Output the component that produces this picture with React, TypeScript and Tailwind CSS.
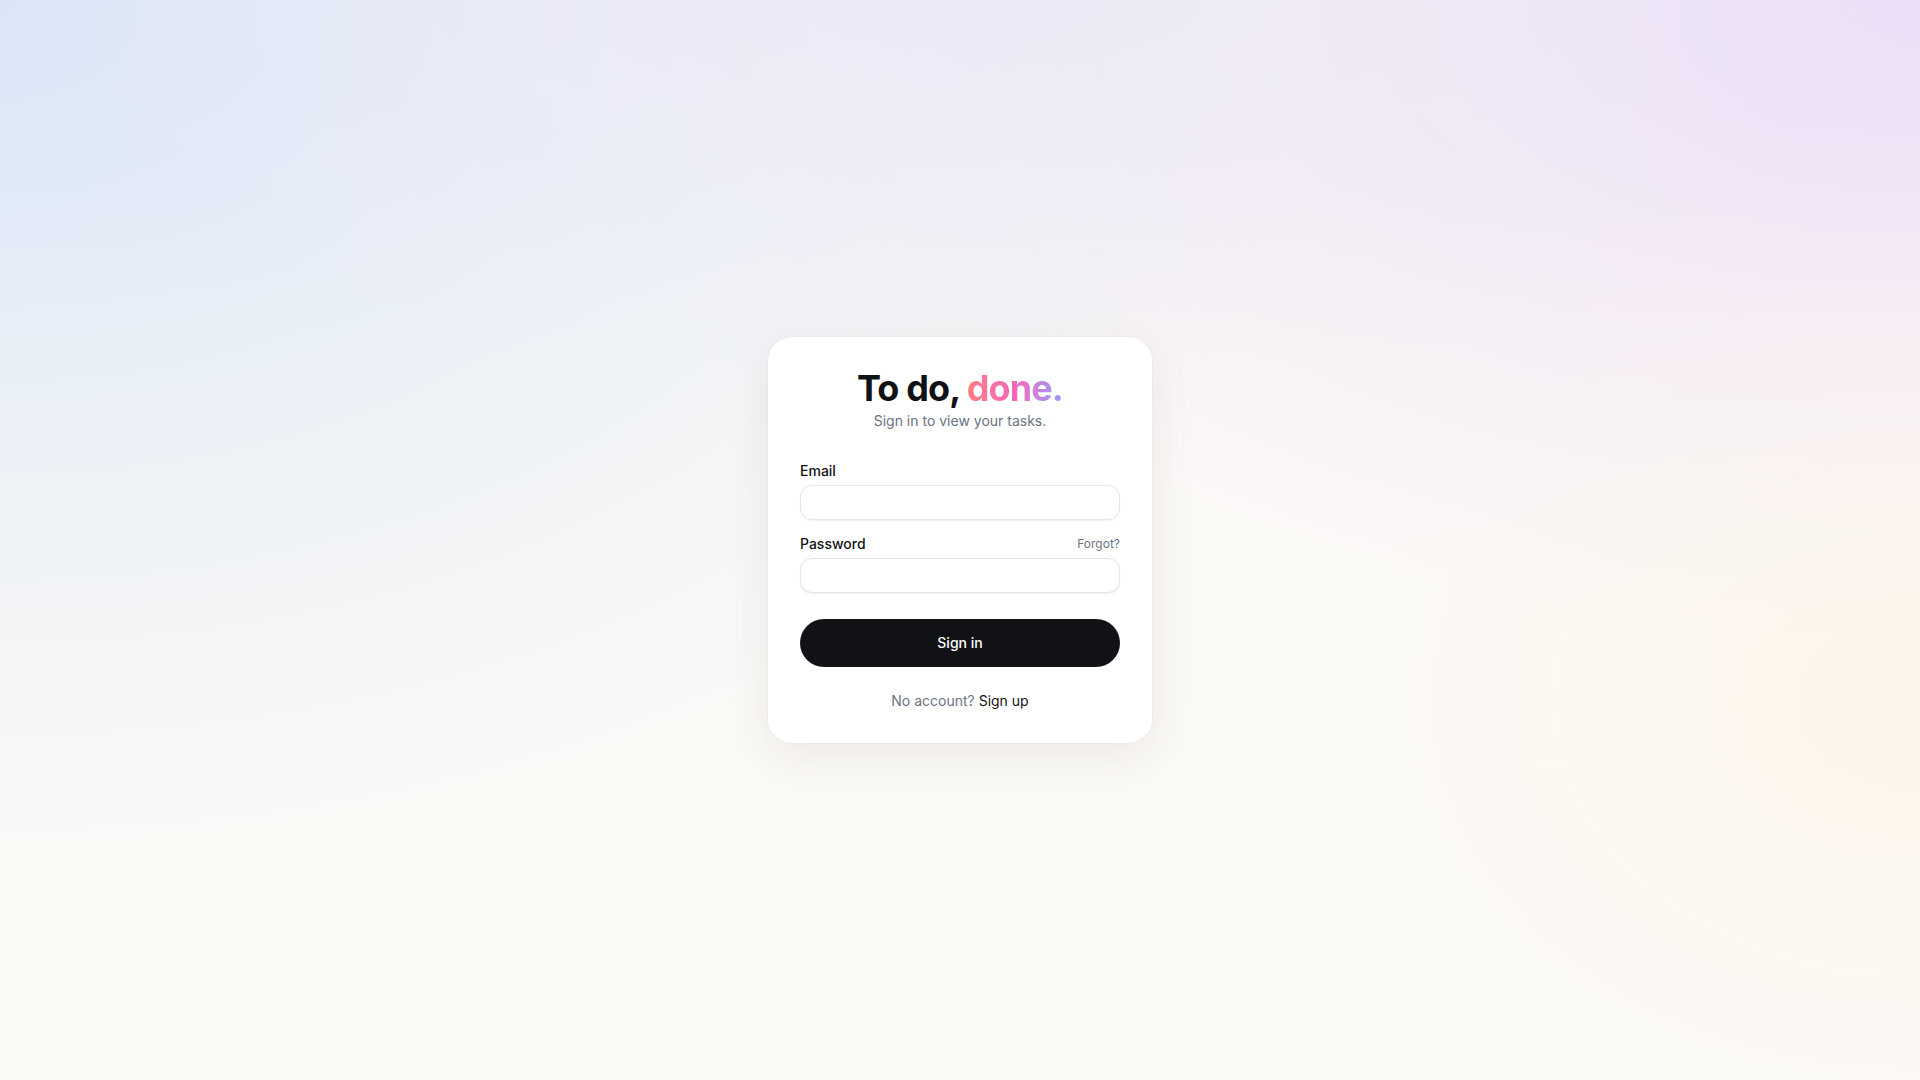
import { useState } from "react";

export default function App() {
    const [email, setEmail] = useState("");
    const [password, setPassword] = useState("");

    return (
        <div
            className="relative min-h-screen w-full flex items-center justify-center bg-[#fbf9f6] overflow-hidden"
            style={{ fontFamily: "Inter, 'Noto Sans', sans-serif" }}
        >
            {/* Background washes */}
            <div className="absolute inset-0 bg-[radial-gradient(ellipse_70%_80%_at_0%_0%,#d5e4f7_0%,rgba(222,233,247,0.65)_40%,rgba(251,249,246,0)_100%)]" />
            <div className="absolute inset-0 bg-[radial-gradient(ellipse_65%_60%_at_100%_0%,#ecdaf7_0%,rgba(240,225,245,0.6)_45%,rgba(251,249,246,0)_100%)]" />
            <div className="absolute inset-0 bg-[radial-gradient(ellipse_70%_35%_at_50%_0%,rgba(234,232,246,0.8)_0%,rgba(251,249,246,0)_100%)]" />
            <div className="absolute inset-0 bg-[radial-gradient(ellipse_30%_40%_at_100%_65%,rgba(252,244,232,0.9)_0%,rgba(251,249,246,0)_100%)]" />

            {/* Card */}
            <div className="relative w-96 bg-white rounded-3xl p-8 shadow-[0_12px_40px_rgba(60,50,40,0.08)] ring-1 ring-black/[0.02]">
                <div className="flex flex-col items-center text-center">
                    <h1 className="text-4xl leading-10 font-bold tracking-tight text-[#111216] -mt-px">
                        To do,{" "}
                        <span className="bg-gradient-to-r from-[#ff7e82] via-[#f466ba] to-[#8d98ff] bg-clip-text text-transparent">
                            done.
                        </span>
                    </h1>
                    <p className="mt-[3px] text-sm text-[#6b7280]">Sign in to view your tasks.</p>
                </div>

                <form className="mt-[30px] flex flex-col" onSubmit={(e) => e.preventDefault()}>
                    <label className="text-sm font-medium text-[#111216] mb-1" htmlFor="email">
                        Email
                    </label>
                    <input
                        id="email"
                        type="email"
                        value={email}
                        onChange={(e) => setEmail(e.target.value)}
                        className="h-[35px] w-full rounded-xl border border-[#e4e4ec] bg-white px-3 text-sm shadow-[0_1px_2px_rgba(0,0,0,0.06)] outline-none"
                    />

                    <div className="mt-3.5 mb-1 flex items-center justify-between">
                        <label className="text-sm font-medium text-[#111216]" htmlFor="password">
                            Password
                        </label>
                        <a href="#" className="text-xs text-[#6b7280]">
                            Forgot?
                        </a>
                    </div>
                    <input
                        id="password"
                        type="password"
                        value={password}
                        onChange={(e) => setPassword(e.target.value)}
                        className="h-[35px] w-full rounded-xl border border-[#e4e4ec] bg-white px-3 text-sm shadow-[0_1px_2px_rgba(0,0,0,0.06)] outline-none"
                    />

                    <button
                        type="submit"
                        className="mt-[26px] h-12 w-full rounded-full bg-[#111216] text-sm font-medium text-white"
                    >
                        Sign in
                    </button>
                </form>

                <p className="mt-6 text-center text-sm text-[#6b7280]">
                    No account?{" "}
                    <a href="#" className="text-[#111216]">
                        Sign up
                    </a>
                </p>
            </div>
        </div>
    );
}
